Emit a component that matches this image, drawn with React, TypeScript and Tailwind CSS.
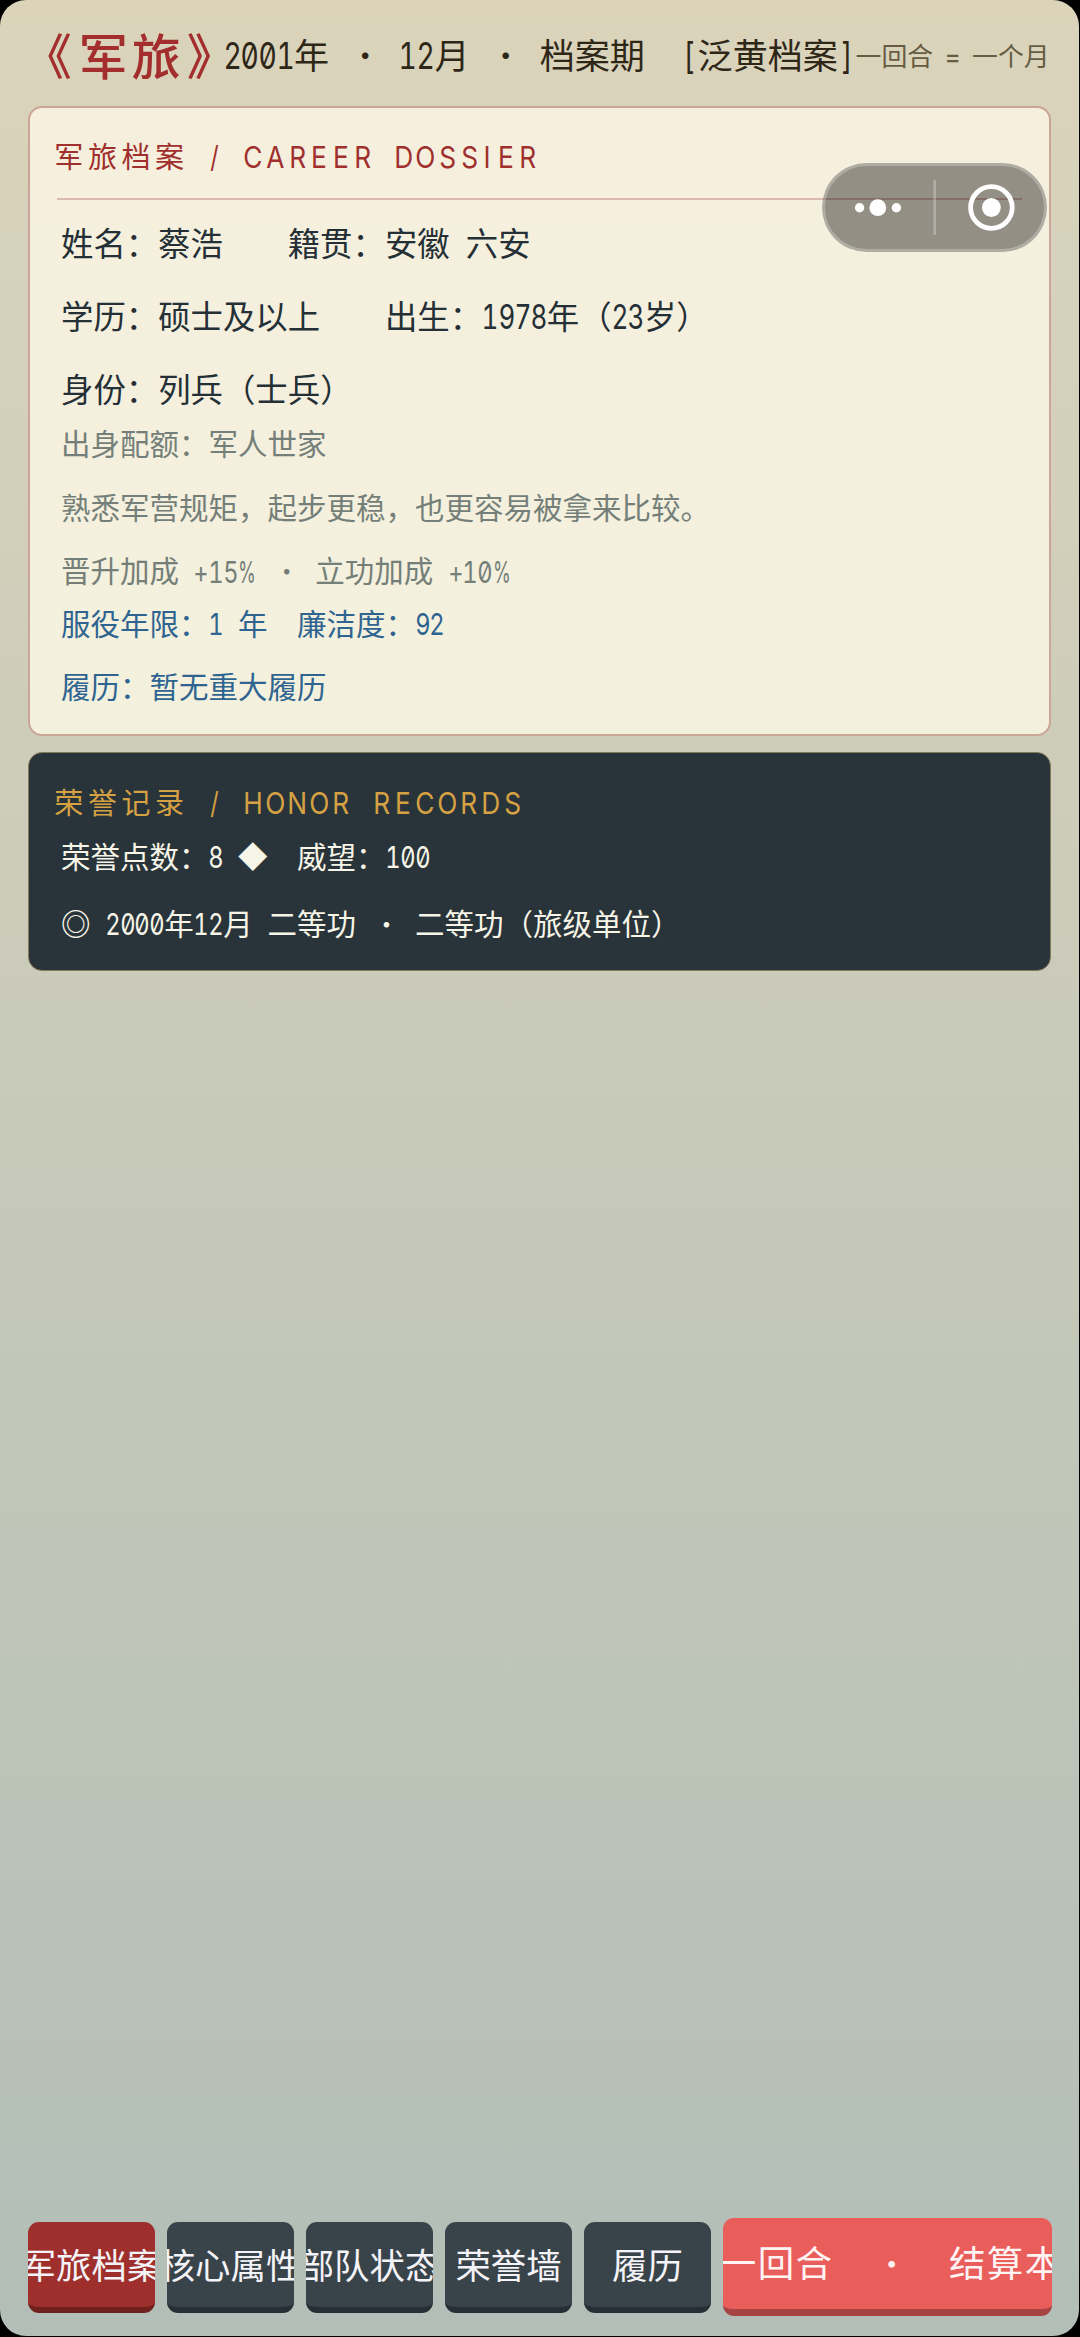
import React from "react";

const NARROW = /[A-Z0-9()\[\]=+%\/]/;

/** Horizontal scale that fits an ASCII glyph into its narrow cell. */
function squeeze(ch: string) {
  if (ch === "%") return "scale-x-[0.6]";
  if (ch === "=") return "scale-x-[0.95]";
  if (/[A-Z]/.test(ch)) return "scale-x-[0.88]";
  return "scale-x-[0.78]";
}

/** Small optical shifts for symbols within a full cell. */
function nudge(ch: string) {
  if (ch === "《") return "-translate-x-[0.06em] -translate-y-[0.056em]";
  if (ch === "》") return "translate-x-[0.04em] -translate-y-[0.056em]";
  if (ch === "·") return "translate-x-[0.03em] font-['Inter'] font-extrabold";
  if (ch === "◎") return "-translate-y-[0.056em] font-bold";
  return "-translate-y-[0.056em]";
}

/** Lays text out on a fixed grid: ideographs take a full cell, ASCII takes a half cell. */
function Grid({ text, className = "" }: { text: string; className?: string }) {
  return (
    <span
      className={`flex shrink-0 items-center whitespace-pre leading-none [--cap:0.5em] [--full:1em] [--half:0.5em] [--thin:0.5em] ${className}`}
    >
      {Array.from(text).map((ch, i) => {
        if (ch === " ") return <span key={i} className="w-(--half) shrink-0"> </span>;
        if (NARROW.test(ch)) {
          const width =
            ch === "%" ? "w-[0.62em]" : ch === "I" ? "w-(--thin)" : /[A-Z]/.test(ch) ? "w-(--cap)" : "w-(--half)";
          return (
            <span key={i} className={`flex shrink-0 justify-center ${width}`}>
              <span className={`font-['Inter'] text-[1.03em] [font-feature-settings:'zero','tnum'] ${squeeze(ch)}`}>
                {ch}
              </span>
            </span>
          );
        }
        return (
          <span key={i} className="flex w-(--full) shrink-0 justify-center">
            <span className={nudge(ch)}>{ch}</span>
          </span>
        );
      })}
    </span>
  );
}

const body = "h-[73px] text-[32.4px] text-[#242f36]";
const note = "h-[63.3px] text-[29.5px] text-[#757f79]";
const stat = "h-[63.3px] text-[29.5px] text-[#2f6491]";
const record = "h-[67px] text-[29.5px] text-[#f7f5e8]";
const heading = "text-[29px] [--cap:21.9px] [--full:33.6px] [--half:18.7px] [--thin:14.5px]";

function Capsule() {
  return (
    <div className="absolute top-[163px] left-[822px] flex h-[89px] w-[225px] items-center rounded-full border-[3px] border-white/25 bg-black/40 bg-clip-border">
      <svg viewBox="0 0 219 83" className="h-full w-full" fill="#fff">
        <circle cx="34.6" cy="41.7" r="4.7" />
        <circle cx="52.8" cy="41.7" r="8.4" />
        <circle cx="71.4" cy="41.7" r="4.7" />
        <rect x="108.4" y="14" width="2.6" height="55" fillOpacity="0.27" />
        <circle cx="166.4" cy="41.5" r="20.8" fill="none" stroke="#fff" strokeWidth="4.8" />
        <circle cx="166.4" cy="41.5" r="9.4" />
      </svg>
    </div>
  );
}

function Tab({ label, active = false }: { label: string; active?: boolean }) {
  return (
    <button
      className={`flex h-[91px] w-[127px] shrink-0 items-center justify-center overflow-hidden rounded-[11px] border-b-[6px] pt-[3px] text-[35.4px] text-[#f4f3f8] ${
        active ? "border-[#70211d] bg-[#9f2f2c]" : "border-[#262f35] bg-[#39434a]"
      }`}
    >
      <Grid text={label} />
    </button>
  );
}

export default function App() {
  return (
    <div className="h-[2337px] w-[1080px] bg-black font-['Noto_Sans_CJK_SC',sans-serif]">
      <main className="relative flex h-[2336px] w-[1079px] flex-col overflow-hidden rounded-[26px] bg-linear-to-b from-[#dbd4bb] to-[#b2beb7] pl-[28px]">
        <header className="-ml-[4.2px] flex h-[106px] shrink-0 items-center pt-[6px]">
          <h1 className="w-[200px] shrink-0 text-[#a32e2d]">
            <Grid text="《军旅》" className="text-[49px] font-medium [--full:53px]" />
          </h1>
          <Grid text="2001年 · 12月 · 档案期  [泛黄档案]" className="text-[35.1px] text-[#2e2718]" />
          <Grid text="一回合 = 一个月" className="text-[25.9px] text-[#655c43]" />
        </header>

        <section className="h-[630px] w-[1023px] shrink-0 rounded-[14px] border-2 border-[#cba598] bg-linear-to-b from-[#f6efde] to-[#f3f1dd]">
          <h2 className="ml-[22px] flex h-[98px] items-center pt-[1px] text-[#9f302d]">
            <Grid text="军旅档案 / CAREER DOSSIER" className={heading} />
          </h2>
          <div className="-mt-[8px] ml-[27px] h-[2px] w-[965px] bg-[#dcb9ad]" />
          <div className="mt-[8px] ml-[31px]">
            <Grid text="姓名：蔡浩    籍贯：安徽 六安" className={body} />
            <Grid text="学历：硕士及以上    出生：1978年（23岁）" className={body} />
            <Grid text="身份：列兵（士兵）" className={body} />
            <div className="-mt-[13.5px]">
              <Grid text="出身配额：军人世家" className={note} />
              <Grid text="熟悉军营规矩，起步更稳，也更容易被拿来比较。" className={note} />
              <Grid text="晋升加成 +15% · 立功加成 +10%" className={note} />
            </div>
            <div className="-mt-[10.5px]">
              <Grid text="服役年限：1 年  廉洁度：92" className={stat} />
              <Grid text="履历：暂无重大履历" className={stat} />
            </div>
          </div>
        </section>

        <section className="mt-[16px] h-[219px] w-[1023px] shrink-0 rounded-[14px] border border-[#85795a] bg-[#29343a]">
          <h2 className="mt-[20px] ml-[23px] flex h-[60px] items-center pt-[1px] text-[#d5a142]">
            <Grid text="荣誉记录 / HONOR RECORDS" className={heading} />
          </h2>
          <div className="-mt-[9px] ml-[32px]">
            <Grid text="荣誉点数：8 ◆  威望：100" className={record} />
            <Grid text="◎ 2000年12月 二等功 · 二等功（旅级单位）" className={record} />
          </div>
        </section>

        <nav className="mt-auto mb-[20px] flex items-center gap-[12px]">
          <Tab label="军旅档案" active />
          <Tab label="核心属性" />
          <Tab label="部队状态" />
          <Tab label="荣誉墙" />
          <Tab label="履历" />
          <button className="flex h-[98px] w-[329px] shrink-0 items-center justify-center overflow-hidden rounded-[11px] border-b-[7px] border-[#a54442] bg-[#e95d5b] pt-[2px] pl-[6px] text-[36.5px] text-[#fff3f3]">
            <Grid text="一回合 · 结算本" className="[--full:37.8px] [--half:39px]" />
          </button>
        </nav>

        <Capsule />
      </main>
    </div>
  );
}
